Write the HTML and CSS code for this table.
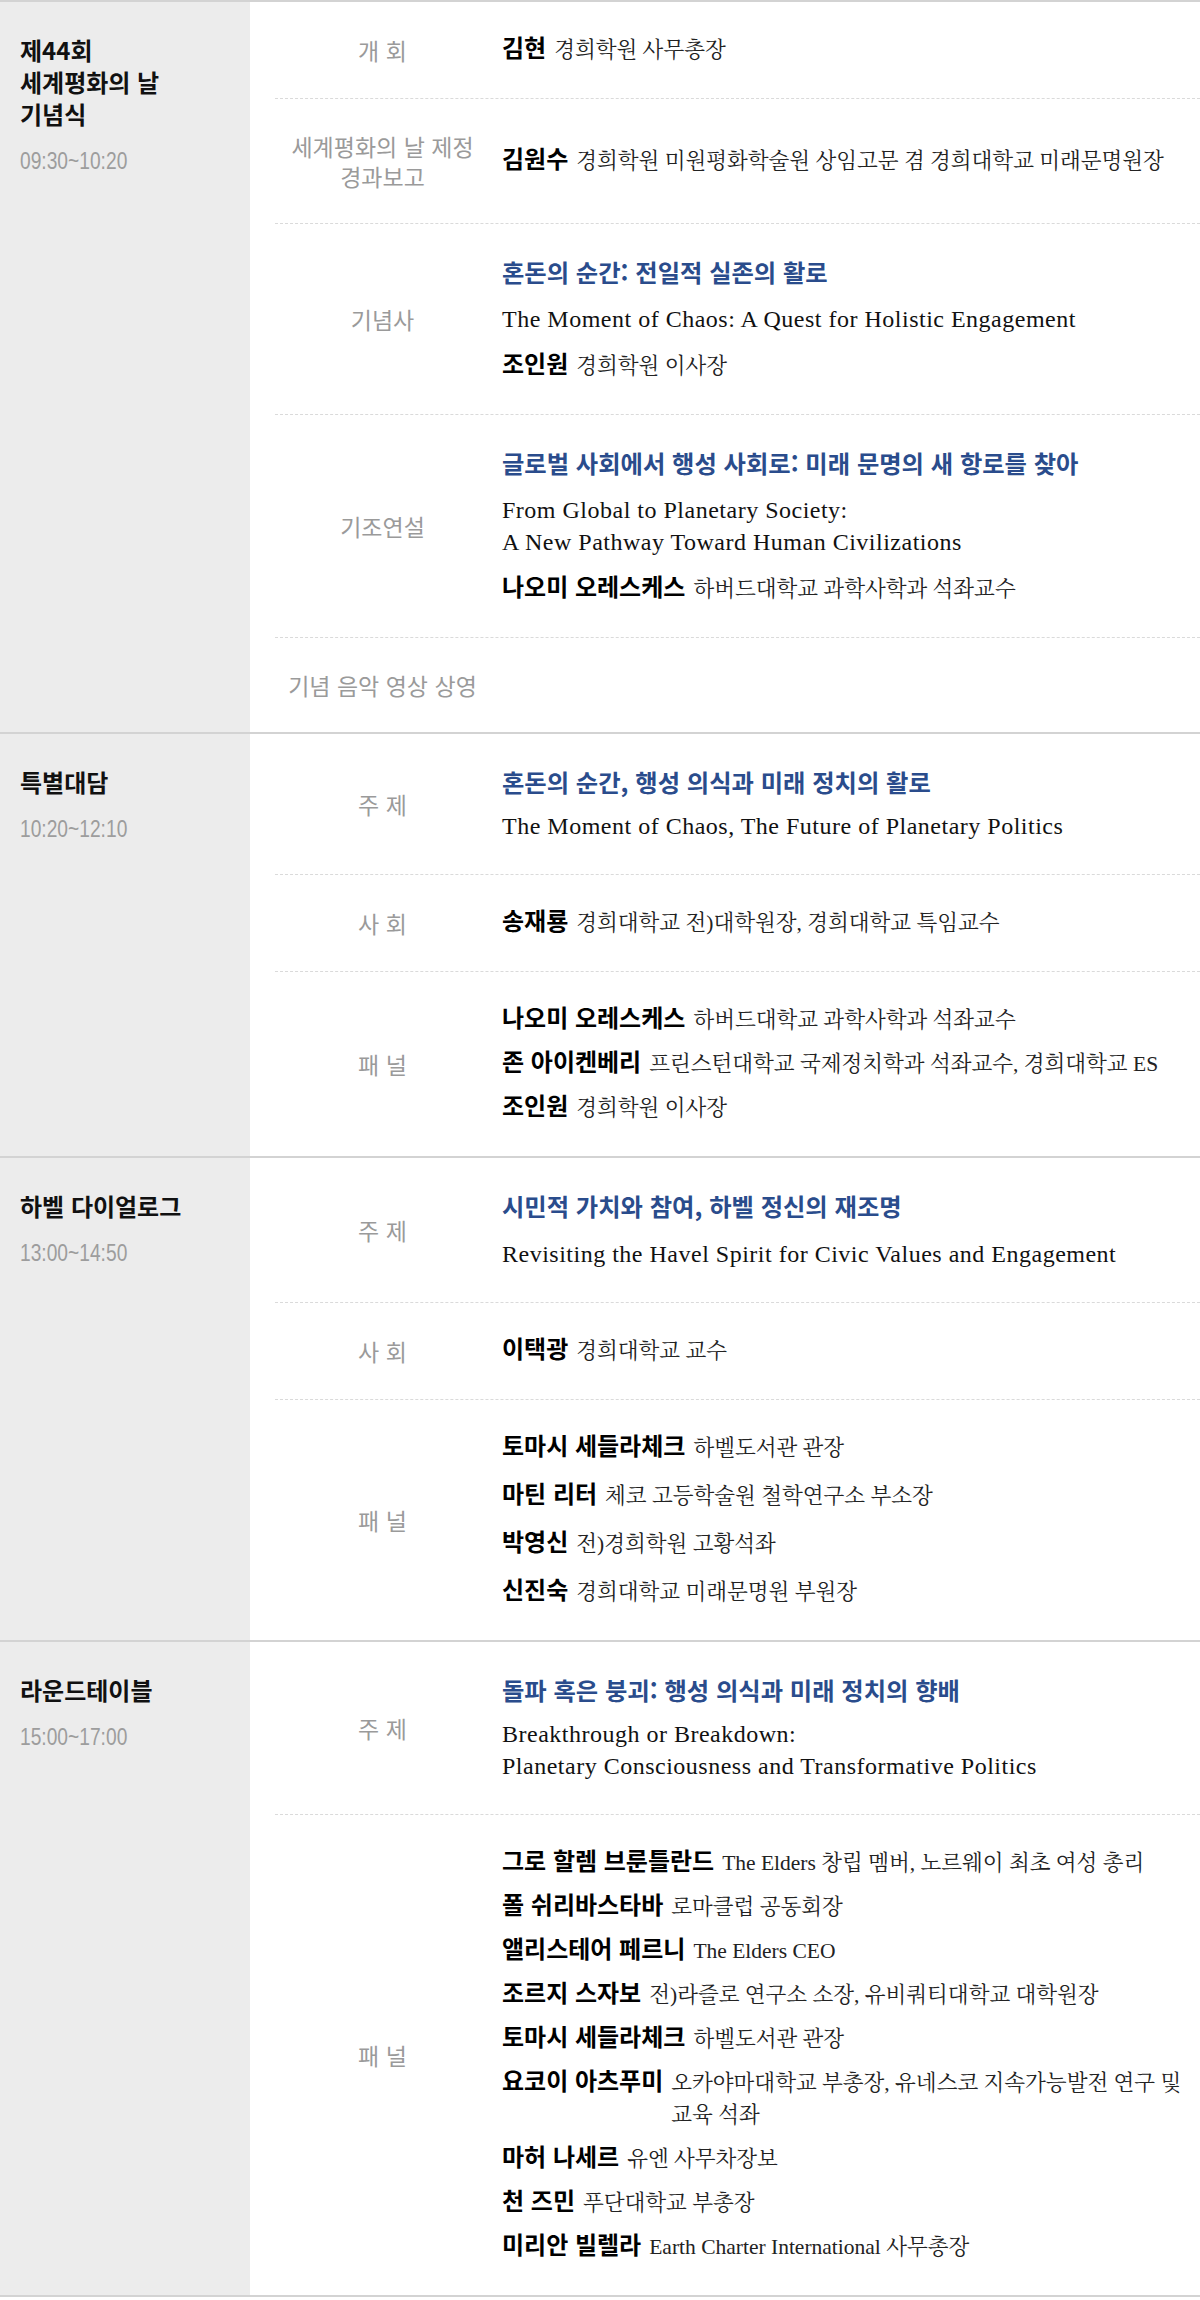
FILE: index.html
```html
<!DOCTYPE html>
<html lang="ko">
<head>
<meta charset="utf-8">
<title>세계평화의 날 프로그램</title>
<link rel="stylesheet" href="styles.css">
</head>
<body>
<div class="program">

  <section class="session s1">
    <div class="session-head">
      <h2 class="session-title">제44회<br>세계평화의 날<br>기념식</h2>
      <p class="session-time"><span>09:30~10:20</span></p>
    </div>
    <div class="session-body">
      <div class="item">
        <div class="label">개 회</div>
        <div class="detail">
          <p class="person"><b>김현</b><span>경희학원 사무총장</span></p>
        </div>
      </div>
      <div class="item">
        <div class="label">세계평화의 날 제정<br>경과보고</div>
        <div class="detail">
          <p class="person"><b>김원수</b><span>경희학원 미원평화학술원 상임고문 겸 경희대학교 미래문명원장</span></p>
        </div>
      </div>
      <div class="item">
        <div class="label">기념사</div>
        <div class="detail">
          <p class="topic">혼돈의 순간: 전일적 실존의 활로</p>
          <p class="topic-en">The Moment of Chaos: A Quest for Holistic Engagement</p>
          <p class="person"><b>조인원</b><span>경희학원 이사장</span></p>
        </div>
      </div>
      <div class="item">
        <div class="label">기조연설</div>
        <div class="detail">
          <p class="topic">글로벌 사회에서 행성 사회로: 미래 문명의 새 항로를 찾아</p>
          <p class="topic-en">From Global to Planetary Society:<br>A New Pathway Toward Human Civilizations</p>
          <p class="person"><b>나오미 오레스케스</b><span>하버드대학교 과학사학과 석좌교수</span></p>
        </div>
      </div>
      <div class="item">
        <div class="label">기념 음악 영상 상영</div>
      </div>
    </div>
  </section>

  <section class="session s2">
    <div class="session-head">
      <h2 class="session-title">특별대담</h2>
      <p class="session-time"><span>10:20~12:10</span></p>
    </div>
    <div class="session-body">
      <div class="item">
        <div class="label">주 제</div>
        <div class="detail">
          <p class="topic">혼돈의 순간, 행성 의식과 미래 정치의 활로</p>
          <p class="topic-en">The Moment of Chaos, The Future of Planetary Politics</p>
        </div>
      </div>
      <div class="item">
        <div class="label">사 회</div>
        <div class="detail">
          <p class="person"><b>송재룡</b><span>경희대학교 전)대학원장, 경희대학교 특임교수</span></p>
        </div>
      </div>
      <div class="item">
        <div class="label">패 널</div>
        <div class="detail">
          <p class="person"><b>나오미 오레스케스</b><span>하버드대학교 과학사학과 석좌교수</span></p>
          <p class="person"><b>존 아이켄베리</b><span>프린스턴대학교 국제정치학과 석좌교수, 경희대학교 ES</span></p>
          <p class="person"><b>조인원</b><span>경희학원 이사장</span></p>
        </div>
      </div>
    </div>
  </section>

  <section class="session s3">
    <div class="session-head">
      <h2 class="session-title">하벨 다이얼로그</h2>
      <p class="session-time"><span>13:00~14:50</span></p>
    </div>
    <div class="session-body">
      <div class="item">
        <div class="label">주 제</div>
        <div class="detail">
          <p class="topic">시민적 가치와 참여, 하벨 정신의 재조명</p>
          <p class="topic-en">Revisiting the Havel Spirit for Civic Values and Engagement</p>
        </div>
      </div>
      <div class="item">
        <div class="label">사 회</div>
        <div class="detail">
          <p class="person"><b>이택광</b><span>경희대학교 교수</span></p>
        </div>
      </div>
      <div class="item">
        <div class="label">패 널</div>
        <div class="detail">
          <p class="person"><b>토마시 세들라체크</b><span>하벨도서관 관장</span></p>
          <p class="person"><b>마틴 리터</b><span>체코 고등학술원 철학연구소 부소장</span></p>
          <p class="person"><b>박영신</b><span>전)경희학원 고황석좌</span></p>
          <p class="person"><b>신진숙</b><span>경희대학교 미래문명원 부원장</span></p>
        </div>
      </div>
    </div>
  </section>

  <section class="session s4">
    <div class="session-head">
      <h2 class="session-title">라운드테이블</h2>
      <p class="session-time"><span>15:00~17:00</span></p>
    </div>
    <div class="session-body">
      <div class="item">
        <div class="label">주 제</div>
        <div class="detail">
          <p class="topic">돌파 혹은 붕괴: 행성 의식과 미래 정치의 향배</p>
          <p class="topic-en">Breakthrough or Breakdown:<br>Planetary Consciousness and Transformative Politics</p>
        </div>
      </div>
      <div class="item">
        <div class="label">패 널</div>
        <div class="detail">
          <p class="person"><b>그로 할렘 브룬틀란드</b><span>The Elders 창립 멤버, 노르웨이 최초 여성 총리</span></p>
          <p class="person"><b>폴 쉬리바스타바</b><span>로마클럽 공동회장</span></p>
          <p class="person"><b>앨리스테어 페르니</b><span>The Elders CEO</span></p>
          <p class="person"><b>조르지 스자보</b><span>전)라즐로 연구소 소장, 유비쿼티대학교 대학원장</span></p>
          <p class="person"><b>토마시 세들라체크</b><span>하벨도서관 관장</span></p>
          <p class="person"><b>요코이 아츠푸미</b><span>오카야마대학교 부총장, 유네스코 지속가능발전 연구 및 교육 석좌</span></p>
          <p class="person"><b>마허 나세르</b><span>유엔 사무차장보</span></p>
          <p class="person"><b>천 즈민</b><span>푸단대학교 부총장</span></p>
          <p class="person"><b>미리안 빌렐라</b><span>Earth Charter International 사무총장</span></p>
        </div>
      </div>
    </div>
  </section>

</div>
</body>
</html>
```

FILE: styles.css
```css
* {
  box-sizing: border-box;
  margin: 0;
  padding: 0;
}

body {
  margin: 0;
  background: #fff;
  font-family: "Noto Sans CJK KR", "Noto Sans", sans-serif;
  color: #111;
}

.program {
  border-top: 2px solid #d3d3d3;
}

.session {
  display: grid;
  grid-template-columns: 250px 1fr;
  border-bottom: 2px solid #d3d3d3;
}

.session-head {
  background: #ececec;
  padding: 32px 20px;
}

.session-title {
  font-size: 24px;
  line-height: 32px;
  font-weight: 700;
  color: #111;
}

.session-time {
  margin-top: 15px;
  line-height: 32px;
  font-family: "Liberation Sans", Arial, sans-serif;
  font-size: 24px;
  color: #9d9d9d;
}

.session-time span {
  display: inline-block;
  transform: scaleX(0.8);
  transform-origin: left center;
}

.session-body {
  padding-left: 25px;
}

.item {
  display: grid;
  grid-template-columns: 215px 1fr;
  column-gap: 12px;
  align-items: center;
  padding: 32px 10px 32px 0;
  border-bottom: 1px dashed #dadada;
}

.item:last-child {
  border-bottom: 0;
}

.label {
  text-align: center;
  font-size: 23px;
  line-height: 30px;
  color: #9a9a9a;
}

.detail {
  display: flex;
  flex-direction: column;
  gap: 12px;
}

.s1 .detail {
  gap: 15px;
}

.s3 .detail {
  gap: 16px;
}

.topic {
  font-size: 24.3px;
  line-height: 32px;
  font-weight: 700;
  color: #2a4c8c;
}

.topic-en {
  font-family: "Liberation Serif", "Times New Roman", serif;
  font-size: 24px;
  line-height: 32px;
  letter-spacing: 0.5px;
  color: #111;
}

.person {
  display: flex;
  align-items: baseline;
  gap: 8px;
  line-height: 32px;
}

.person b {
  flex: none;
  font-size: 24px;
  line-height: 25px;
  font-weight: 700;
  color: #000;
}

.person span {
  flex: 1;
  min-width: 0;
  font-family: "Liberation Serif", "Noto Serif CJK KR", "Noto Serif KR", "Noto Sans CJK KR", serif;
  font-size: 21.5px;
  color: #222;
  word-break: keep-all;
}
```
